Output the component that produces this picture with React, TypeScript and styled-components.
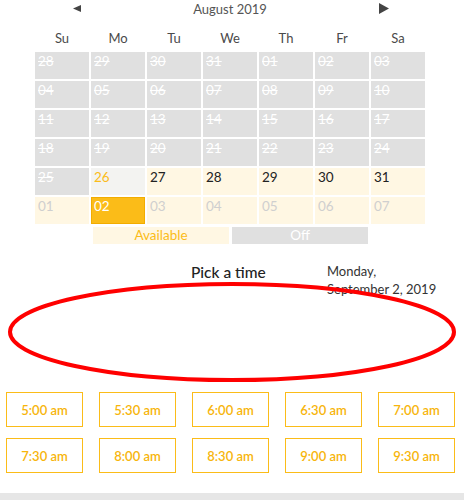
import React from "react";
import styled, { createGlobalStyle } from "styled-components";

const GlobalStyle = createGlobalStyle`
  body {
    margin: 0;
    background: #fff;
    font-family: Lato, "Open Sans", Arial, sans-serif;
  }
`;

const YELLOW = "#fbbc18";
const CREAM = "#fff7e3";
const GREY = "#e0e0e0";

const Page = styled.div`
  position: relative;
  width: 464px;
  height: 500px;
  overflow: hidden;
`;

const Calendar = styled.div`
  width: 390px;
  margin-left: 35px;
`;

const MonthBar = styled.div`
  display: grid;
  grid-template-columns: 1fr auto 1fr;
  align-items: center;
  height: 17px;
  color: #555;
  font-size: 13px;
`;

const NavArrow = styled.span<{ $side: "left" | "right" }>`
  display: flex;
  justify-content: ${({ $side }) => ($side === "left" ? "flex-start" : "flex-end")};
  padding: ${({ $side }) => ($side === "left" ? "0 0 0 38px" : "0 36px 0 0")};
`;

const WeekDays = styled.div`
  display: grid;
  grid-template-columns: repeat(7, 54px);
  column-gap: 2px;
  margin-top: 13px;
  height: 22px;
  font-size: 13px;
  color: #4a4a4a;
  text-align: center;
`;

const DayGrid = styled.div`
  display: grid;
  grid-template-columns: repeat(7, 54px);
  grid-auto-rows: 27px;
  gap: 2px;
`;

type Kind = "off" | "today" | "open" | "next" | "picked";

const Cell = styled.div<{ $kind: Kind }>`
  box-sizing: border-box;
  font-size: 13.5px;
  line-height: 17px;
  background: ${({ $kind }) =>
    $kind === "off"
      ? GREY
      : $kind === "today"
      ? "#f3f3f1"
      : $kind === "picked"
      ? YELLOW
      : CREAM};
  color: ${({ $kind }) =>
    $kind === "off"
      ? "#fff"
      : $kind === "today"
      ? YELLOW
      : $kind === "open"
      ? "#222"
      : $kind === "next"
      ? "#cfcfcf"
      : "#fff"};
  text-decoration: ${({ $kind }) => ($kind === "off" ? "line-through" : "none")};
  border: ${({ $kind }) => ($kind === "picked" ? "1px solid #f2ac00" : "none")};
  padding: ${({ $kind }) => ($kind === "picked" ? "0 2px" : "1px 3px")};
`;

const Legend = styled.div`
  display: flex;
  gap: 3px;
  margin: 3px 0 0 58px;
`;

const LegendItem = styled.div<{ $on: boolean }>`
  width: 136px;
  height: 17px;
  line-height: 17px;
  text-align: center;
  font-size: 13.5px;
  background: ${({ $on }) => ($on ? CREAM : GREY)};
  color: ${({ $on }) => ($on ? YELLOW : "#fff")};
`;

const TimeHeader = styled.div`
  display: grid;
  grid-template-columns: 191px 136px 1fr;
  margin-top: 18px;
`;

const Title = styled.div`
  grid-column: 2;
  font-size: 15.5px;
  font-weight: 500;
  color: #222;
  padding-top: 1px;
`;

const DateText = styled.div`
  grid-column: 3;
  font-size: 13px;
  line-height: 18px;
  color: #333;
`;

const Slots = styled.div`
  display: grid;
  grid-template-columns: repeat(5, 77px);
  grid-auto-rows: 35px;
  column-gap: 16px;
  row-gap: 11px;
  margin: 94px 0 0 6px;
`;

const Slot = styled.button`
  box-sizing: border-box;
  border: 1.5px solid ${YELLOW};
  background: #fff;
  color: #f7b50c;
  font-family: Lato, Arial, sans-serif;
  font-size: 13px;
  font-weight: 600;
  padding: 0;
`;

const BottomRule = styled.div`
  position: absolute;
  left: 0;
  right: 0;
  bottom: 0;
  height: 7px;
  background: #e6e6e6;
`;

const Annotation = styled.svg`
  position: absolute;
  left: 0;
  top: 0;
  pointer-events: none;
`;

const days: { n: string; k: Kind }[] = [
  ...["28", "29", "30", "31", "01", "02", "03", "04", "05", "06", "07", "08", "09", "10",
    "11", "12", "13", "14", "15", "16", "17", "18", "19", "20", "21", "22", "23", "24", "25"].map(
    (n) => ({ n, k: "off" as Kind })
  ),
  { n: "26", k: "today" },
  ...["27", "28", "29", "30", "31"].map((n) => ({ n, k: "open" as Kind })),
  { n: "01", k: "next" },
  { n: "02", k: "picked" },
  ...["03", "04", "05", "06", "07"].map((n) => ({ n, k: "next" as Kind })),
];

const times = [
  "5:00 am", "5:30 am", "6:00 am", "6:30 am", "7:00 am",
  "7:30 am", "8:00 am", "8:30 am", "9:00 am", "9:30 am",
];

export default function App() {
  return (
    <Page>
      <GlobalStyle />
      <Calendar>
        <MonthBar>
          <NavArrow $side="left">
            <svg width="8" height="7" viewBox="0 0 8 7">
              <polygon points="0,3.5 8,0 8,7" fill="#444" />
            </svg>
          </NavArrow>
          <span>August 2019</span>
          <NavArrow $side="right">
            <svg width="10" height="11" viewBox="0 0 10 11">
              <polygon points="0,0 10,5.5 0,11" fill="#444" />
            </svg>
          </NavArrow>
        </MonthBar>
        <WeekDays>
          {["Su", "Mo", "Tu", "We", "Th", "Fr", "Sa"].map((d) => (
            <span key={d}>{d}</span>
          ))}
        </WeekDays>
        <DayGrid>
          {days.map((d, i) => (
            <Cell key={i} $kind={d.k}>
              {d.n}
            </Cell>
          ))}
        </DayGrid>
        <Legend>
          <LegendItem $on>Available</LegendItem>
          <LegendItem $on={false}>Off</LegendItem>
        </Legend>
      </Calendar>
      <TimeHeader>
        <Title>Pick a time</Title>
        <DateText>
          Monday,
          <br />
          September 2, 2019
        </DateText>
      </TimeHeader>
      <Slots>
        {times.map((t) => (
          <Slot key={t}>{t}</Slot>
        ))}
      </Slots>
      <BottomRule />
      <Annotation width="464" height="500" viewBox="0 0 464 500">
        <ellipse cx="232" cy="332" rx="222" ry="48" fill="none" stroke="#f00" strokeWidth="4" />
      </Annotation>
    </Page>
  );
}
